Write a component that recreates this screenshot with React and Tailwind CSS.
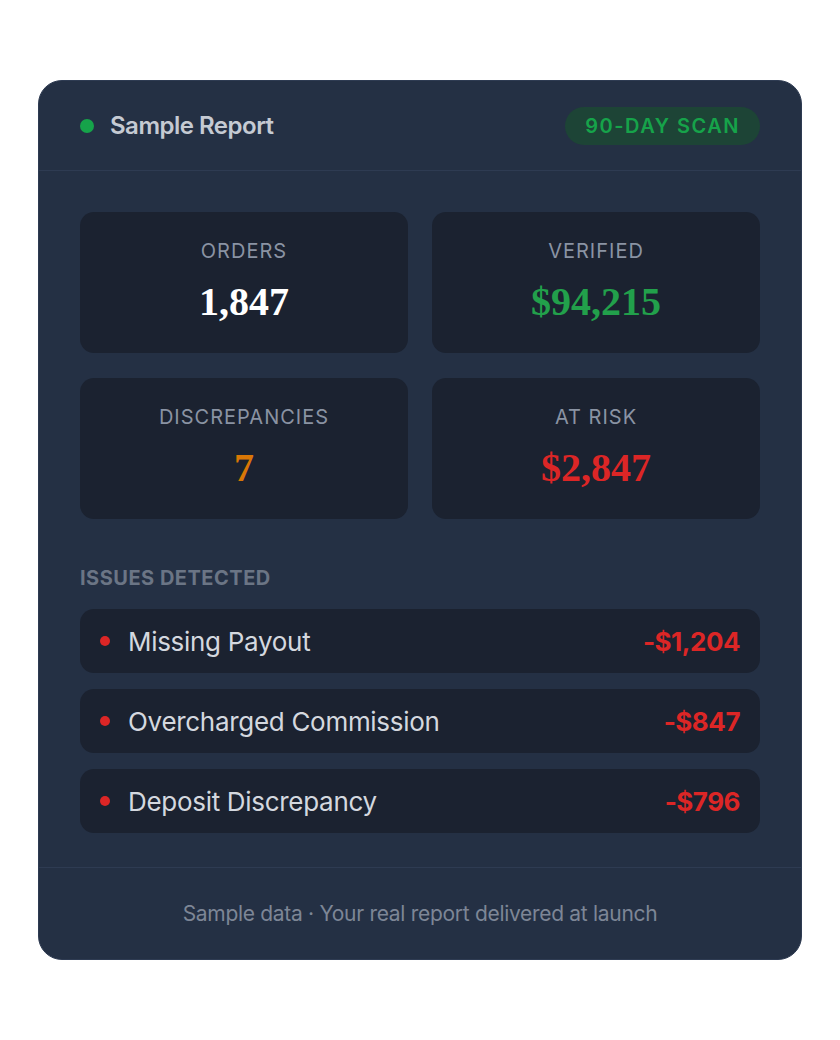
export default function App() {
  const sans = { fontFamily: 'Inter, "Noto Sans", sans-serif' };
  const serif = { fontFamily: '"Liberation Serif", "DejaVu Serif", serif' };
  const stats = [
    ["ORDERS", "1,847", "text-white"],
    ["VERIFIED", "$94,215", "text-[#22a04b]"],
    ["DISCREPANCIES", "7", "text-[#d97706]"],
    ["AT RISK", "$2,847", "text-[#dc2626]"],
  ];
  const issues = [
    ["Missing Payout", "-$1,204"],
    ["Overcharged Commission", "-$847"],
    ["Deposit Discrepancy", "-$796"],
  ];
  return (
    <div className="bg-white w-[840px] h-[1040px] pt-[80px] pl-[38px]" style={sans}>
      <div className="w-[764px] h-[880px] bg-[#243044] rounded-[24px] border border-[#2e3b52] flex flex-col overflow-hidden">
        <div className="h-[90px] flex items-center justify-between px-[41px] border-b border-[#2e3b52] shrink-0">
          <div className="flex items-center gap-[16px]">
            <span className="w-[14px] h-[14px] rounded-full bg-[#16a34a]" />
            <span className="text-[24px] font-semibold text-[#c5cad3] tracking-[-0.5px]">Sample Report</span>
          </div>
          <span className="h-[38px] px-[20px] rounded-full bg-[#1d4436] text-[#16a34a] text-[20px] font-semibold tracking-[1.5px] flex items-center">90-DAY SCAN</span>
        </div>
        <div className="px-[41px] pt-[41px] flex-1">
          <div className="grid grid-cols-2 gap-x-[24px] gap-y-[25px]">
            {stats.map(([l, v, c]) => (
              <div key={l} className="h-[141px] bg-[#1b2230] rounded-[14px] flex flex-col items-center pt-[24px]">
                <div className="text-[20px] text-[#8a93a3] tracking-[1px]">{l}</div>
                <div className={`text-[40px] font-bold leading-[1] mt-[16px] ${c}`} style={serif}>{v}</div>
              </div>
            ))}
          </div>
          <div className="mt-[44px] text-[20px] font-bold text-[#6b7585] tracking-[0.5px]">ISSUES DETECTED</div>
          <div className="mt-[16px] flex flex-col gap-[16px]">
            {issues.map(([n, a]) => (
              <div key={n} className="h-[64px] bg-[#1b2230] rounded-[14px] flex items-center justify-between pl-[20px] pr-[20px]">
                <div className="flex items-center gap-[18px]">
                  <span className="w-[10px] h-[10px] rounded-full bg-[#dc2626]" />
                  <span className="text-[26px] text-[#d4d8df] tracking-[-0.3px]">{n}</span>
                </div>
                <span className="text-[26px] font-bold text-[#dc2626] tracking-[-0.5px]">{a}</span>
              </div>
            ))}
          </div>
        </div>
        <div className="h-[92px] border-t border-[#2e3b52] flex items-center justify-center text-[21px] text-[#7d8696] tracking-[-0.3px] shrink-0">
          Sample data · Your real report delivered at launch
        </div>
      </div>
    </div>
  );
}
